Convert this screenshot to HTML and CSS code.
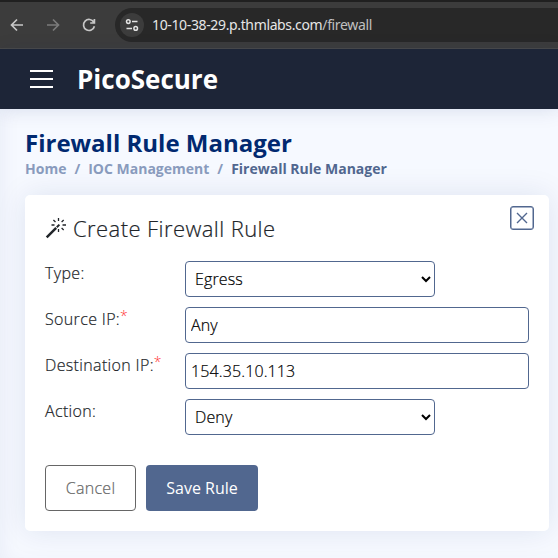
FILE: index.html
```html
<!DOCTYPE html>
<html lang="en">
<head>
<meta charset="utf-8">
<title>Firewall Rule Manager</title>
<link rel="stylesheet" href="styles.css">
</head>
<body>
<div class="browser">
  <svg class="nav" width="16" height="16" viewBox="0 0 16 16"><path d="M14 8H3M8 2.5L2.5 8L8 13.5"/></svg>
  <svg class="nav dim" width="16" height="16" viewBox="0 0 16 16"><path d="M2 8H13M8 2.5L13.5 8L8 13.5"/></svg>
  <svg class="nav" width="16" height="16" viewBox="0 0 16 16"><path d="M12.8 5.2A5.5 5.5 0 1 0 13.4 9.2M13.4 2V6H9.2"/></svg>
  <div class="address">
    <span class="site"><svg width="14" height="14" viewBox="0 0 14 14"><circle cx="3.3" cy="3.6" r="1.8"/><path d="M7 3.6H12.5M1.5 10.4H7"/><circle cx="10.7" cy="10.4" r="1.8"/></svg></span>
    <span class="url">10-10-38-29.p.thmlabs.com<span class="path">/firewall</span></span>
  </div>
</div>
<header class="topbar">
  <span class="burger"><i></i><i></i><i></i></span>
  <span class="brand">PicoSecure</span>
</header>
<main>
  <h1>Firewall Rule Manager</h1>
  <nav class="crumbs"><span>Home</span><span>/</span><span>IOC Management</span><span>/</span><span class="current">Firewall Rule Manager</span></nav>
  <section class="card">
    <div class="card-head">
      <svg class="wand" width="22" height="22" viewBox="0 0 22 22"><path class="stick" d="M1.7 20.3L11.2 10.8"/><path class="tip" d="M11.8 10.2L14.4 7.6"/><path class="rays" d="M13.5 1V4M13.5 12V15M6.5 8H9.5M17.5 8H21M8.4 3L10.5 5M16.6 5L18.7 3M16.6 11L18.7 13"/></svg>
      <h2>Create Firewall Rule</h2>
      <button class="close" aria-label="Close"><svg width="12" height="12" viewBox="0 0 12 12"><path d="M1 1L11 11M11 1L1 11"/></svg></button>
    </div>
    <div class="row"><label>Type:</label><select><option>Egress</option></select></div>
    <div class="row"><label>Source IP:<sup>*</sup></label><input type="text" value="Any"></div>
    <div class="row"><label>Destination IP:<sup>*</sup></label><input type="text" value="154.35.10.113"></div>
    <div class="row"><label>Action:</label><select><option>Deny</option></select></div>
    <div class="actions"><button class="cancel">Cancel</button><button class="save">Save Rule</button></div>
  </section>
</main>
</body>
</html>
```
FILE: styles.css
```css
* { box-sizing: border-box; }
body {
  margin: 0;
  height: 558px;
  overflow: hidden;
  background: #f6f9ff;
  color: #212529;
  font: 300 16px/24px "Open Sans", sans-serif;
}
svg { fill: none; }
.browser {
  height: 49px;
  padding: 6px 0 6px 9px;
  display: flex;
  align-items: center;
  background: #3c3c3c;
  border-top: 2px solid #202020;
  border-bottom: 1px solid #494949;
}
.nav { margin-right: 20px; stroke: #c7c7c7; stroke-width: 1.7; flex: none; }
.nav.dim { stroke: #7b7b7b; }
.address {
  flex: 1;
  height: 34px;
  margin-left: -2px;
  padding-left: 5px;
  display: flex;
  align-items: center;
  background: #282828;
  border-radius: 17px 0 0 17px;
}
.site {
  width: 24px;
  height: 24px;
  display: grid;
  place-items: center;
  border-radius: 50%;
  background: #3c3c3c;
}
.site svg { stroke: #e3e3e3; stroke-width: 1.5; }
.url { margin-left: 8px; color: #e6e6e6; font: 400 14px/20px "Noto Sans", sans-serif; letter-spacing: -0.36px; }
.path { color: #c0c0c0; }
.topbar {
  position: relative;
  height: 60px;
  padding-left: 30px;
  display: flex;
  align-items: center;
  background: #1d2537;
  box-shadow: 0 2px 20px rgba(1, 41, 112, 0.1);
}
.burger { width: 23px; height: 18px; display: flex; flex-direction: column; justify-content: space-between; }
.burger i { height: 2px; background: #fff; }
.brand { margin-left: 24px; color: #fff; font-weight: 700; font-size: 26px; line-height: 36px; }
main { height: 449px; padding: 19px 9px 0 25px; box-shadow: inset 10px 0 20px -8px rgba(1, 41, 112, 0.06); }
h1 { margin: 0; color: #012970; font-size: 24px; line-height: 30px; font-weight: 700; }
.crumbs { display: flex; gap: 8px; color: #899bbd; font-size: 14px; line-height: 21px; font-weight: 700; }
.current { color: #51678f; }
.card {
  height: 336px;
  margin-top: 16px;
  padding: 20px;
  background: #fff;
  border-radius: 5px;
  box-shadow: 0 0 30px rgba(1, 41, 112, 0.1);
}
.card-head { display: flex; height: 46px; }
.wand { margin-top: 2px; stroke: #212529; }
.stick { stroke-width: 2.5; }
.tip { stroke-width: 2; }
.rays { stroke-width: 1.3; }
h2 {
  margin: -1px 0 0 6px;
  font-size: 22px;
  line-height: 28px;
  font-weight: 300;
  letter-spacing: 0.42px;
  -webkit-text-stroke: 0.2px;
}
button { font: 300 16px/24px "Open Sans", sans-serif; border-radius: 4px; }
.close {
  width: 24px;
  height: 24px;
  margin: -9px -5px 0 auto;
  padding: 0;
  display: grid;
  place-items: center;
  background: #fff;
  border: 1px solid #51678f;
  box-shadow: inset 0 0 0 0.5px #51678f;
  border-radius: 3px;
}
.close svg { stroke: #51678f; stroke-width: 1.4; }
.row { display: flex; height: 46px; }
label { width: 140px; letter-spacing: 0.35px; -webkit-text-stroke: 0.2px; }
sup { color: #f33; font-size: 14px; line-height: 0; vertical-align: 4px; letter-spacing: 0; -webkit-text-stroke: 0; }
input, select {
  height: 36px;
  border: 1px solid #51678f;
  border-radius: 4px;
  background: #fff;
  color: #000;
  font: 300 16px/24px "Open Sans", sans-serif;
  letter-spacing: 0.12px;
  -webkit-text-stroke: 0.2px;
}
input { flex: 1; min-width: 0; padding: 0 5px; }
select { width: 250px; padding: 0 5px; }
.actions { display: flex; gap: 10px; margin-top: 20px; }
.actions button { height: 46px; padding: 0; }
.cancel { width: 91px; border: 1px solid #666; background: #fff; color: #666; letter-spacing: 0.3px; -webkit-text-stroke: 0.2px; }
.save { width: 112px; border: 0; background: #51678f; color: #fff; font-weight: 400; }
```
